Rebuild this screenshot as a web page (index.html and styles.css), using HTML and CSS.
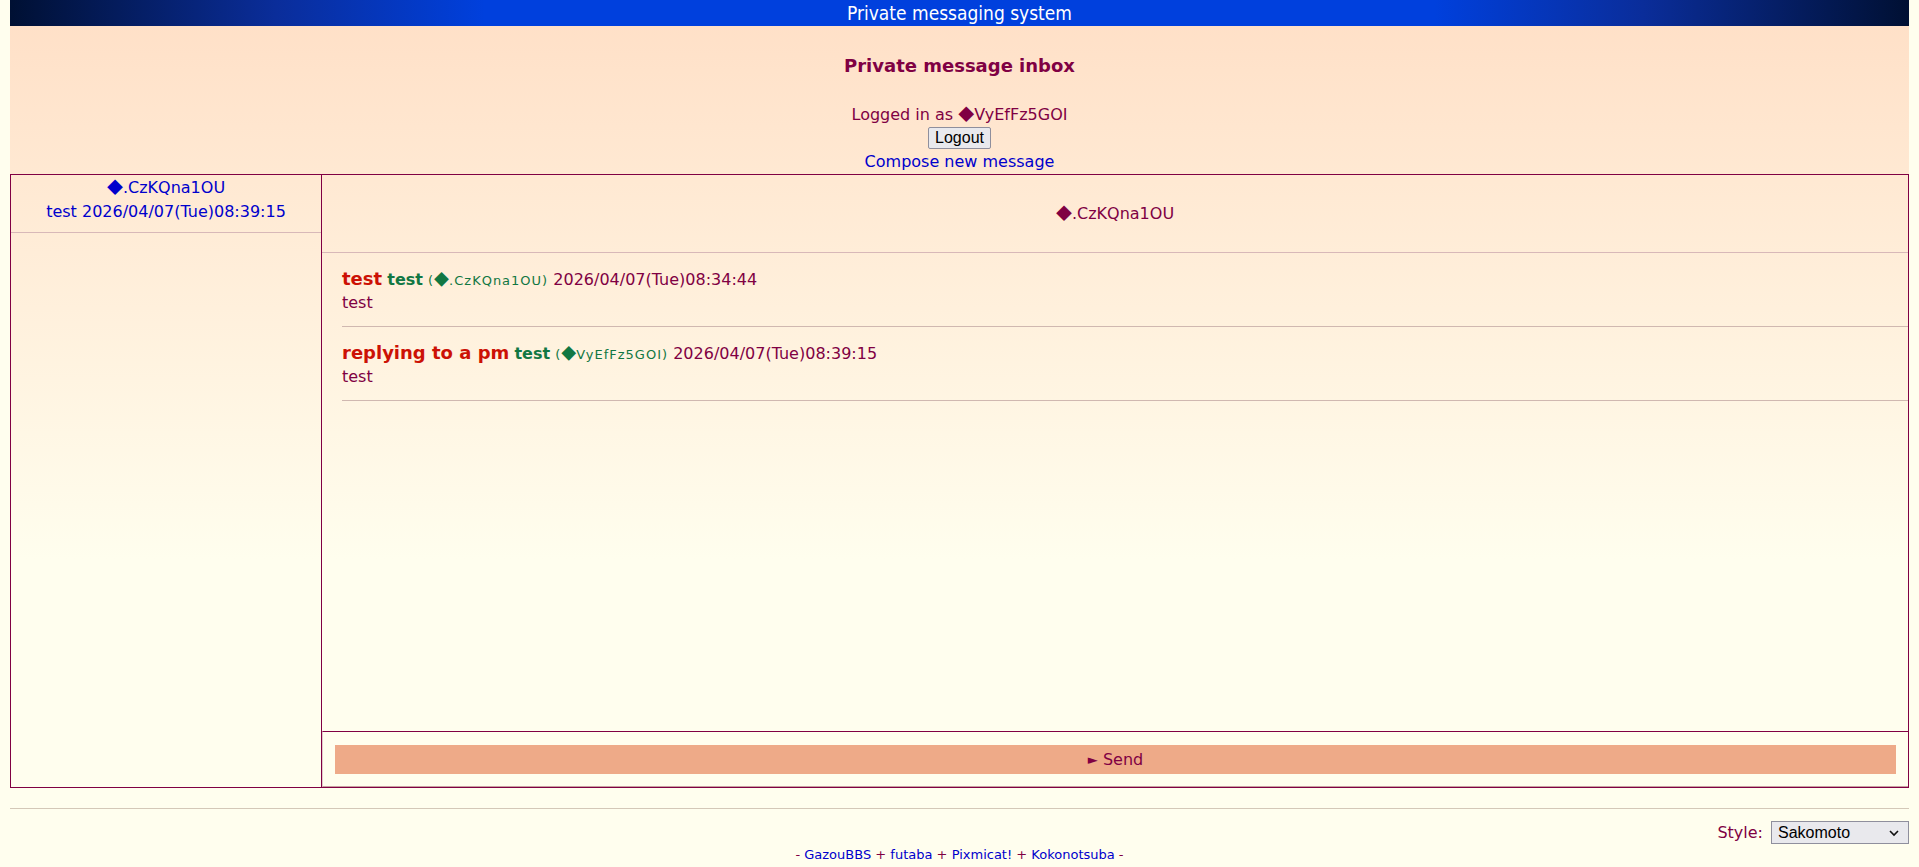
FILE: index.html
```html
<!DOCTYPE html>
<html>
<head>
<meta charset="utf-8">
<title>Private message inbox</title>
<link rel="stylesheet" href="styles.css">
</head>
<body>
<div class="topbar">Private messaging system</div>
<h1 class="title">Private message inbox</h1>
<div class="login">
  <div class="logged">Logged in as <span class="dia">◆</span>VyEfFz5GOI</div>
  <button class="btn" type="button">Logout</button>
  <div class="compose"><a class="link" href="#">Compose new message</a></div>
</div>
<div class="inbox">
  <div class="threads">
    <a class="thread" href="#">
      <span class="line"><span class="dia">◆</span>.CzKQna1OU</span>
      <span class="line">test 2026/04/07(Tue)08:39:15</span>
    </a>
  </div>
  <div class="convo">
    <div class="convo-head"><span class="dia">◆</span>.CzKQna1OU</div>
    <div class="messages">
      <div class="msg">
        <div class="msg-head"><span class="subject">test</span> <span class="name">test</span> <span class="trip">(<span class="dia">◆</span>.CzKQna1OU)</span> <span class="date">2026/04/07(Tue)08:34:44</span></div>
        <div class="msg-body">test</div>
      </div>
      <div class="msg">
        <div class="msg-head"><span class="subject">replying to a pm</span> <span class="name">test</span> <span class="trip">(<span class="dia">◆</span>VyEfFz5GOI)</span> <span class="date">2026/04/07(Tue)08:39:15</span></div>
        <div class="msg-body">test</div>
      </div>
    </div>
    <div class="reply">
      <button class="send" type="button"><span class="tri">►</span> Send</button>
    </div>
  </div>
</div>
<div class="rule"></div>
<div class="style-row">
  <label class="style-label">Style:</label>
  <div class="select"><span>Sakomoto</span><svg width="12" height="8" viewBox="0 0 12 8"><path d="M2 2 L6 6 L10 2" fill="none" stroke="#111" stroke-width="1.6"/></svg></div>
</div>
<div class="footer">- <a href="#">GazouBBS</a> + <a href="#">futaba</a> + <a href="#">Pixmicat!</a> + <a href="#">Kokonotsuba</a> -</div>
</body>
</html>
```
FILE: styles.css
```css
html {
  background: #fffeee;
}
body {
  margin: 0 10px;
  min-height: 867px;
  background: linear-gradient(to bottom, #ffdfc6 0px, #fffeee 560px) no-repeat;
  background-color: #fffeee;
  font-family: "DejaVu Sans", sans-serif;
  font-size: 16px;
  color: #800043;
}
.dia {
  font-family: "Noto Sans CJK JP", "DejaVu Sans", sans-serif;
  line-height: 1;
}
.topbar {
  height: 26px;
  line-height: 26px;
  text-align: center;
  color: #fff;
  font-family: "DejaVu Sans Condensed", "DejaVu Sans", sans-serif;
  font-stretch: condensed;
  font-size: 19px;
  background: linear-gradient(to right, #001033 0%, #0a2d9a 14%, #0040dd 25%, #0040dd 75%, #0a2d9a 86%, #001033 100%);
}
.title {
  margin: 28px 0 0;
  text-align: center;
  font-size: 18px;
  line-height: 24px;
  font-weight: bold;
  color: #800043;
}
.login {
  margin-top: 24px;
  text-align: center;
}
.logged {
  height: 25px;
  line-height: 25px;
}
.btn {
  display: inline-block;
  height: 22px;
  padding: 0 6px;
  margin: 0;
  font-family: "Liberation Sans", Arial, sans-serif;
  font-size: 16px;
  color: #000;
  background: #e9e9ed;
  border: 1px solid #8f8f9d;
  border-radius: 2px;
  vertical-align: top;
}
.link, .thread, .footer a {
  color: #0000cc;
  text-decoration: none;
}
.compose {
  height: 25px;
  line-height: 25px;
}
.inbox {
  display: grid;
  grid-template-columns: 311px 1fr;
  height: 612px;
  border: 1px solid #800043;
}
.threads {
  border-right: 1px solid #800043;
}
.thread {
  display: flex;
  flex-direction: column;
  align-items: center;
  padding: 1px 0 8px;
  line-height: 24px;
  border-bottom: 1px solid #d8b8b8;
}
.thread .line {
  height: 24px;
}
.convo {
  display: flex;
  flex-direction: column;
  min-width: 0;
}
.convo-head {
  height: 77px;
  line-height: 77px;
  text-align: center;
  border-bottom: 1px solid #d8b8b8;
}
.messages {
  flex: 1;
  padding-left: 20px;
}
.msg {
  padding-top: 13px;
}
.msg-head {
  height: 25px;
  line-height: 25px;
  white-space: nowrap;
}
.subject {
  color: #cc1105;
  font-weight: bold;
  font-size: 18px;
}
.name {
  color: #117743;
  font-weight: bold;
}
.trip {
  color: #117743;
  font-size: 13px;
  letter-spacing: 1px;
}
.trip .dia {
  font-size: 15px;
  letter-spacing: 0;
}
.msg-body {
  height: 24px;
  line-height: 24px;
  padding-bottom: 11px;
  border-bottom: 1px solid #d0b8b0;
}
.reply {
  padding: 13px 12px 12px 12px;
  border-top: 1px solid #800043;
  border-left: 1px solid #e2cccc;
  border-bottom: 1px solid #c8a0a0;
}
.send {
  display: block;
  width: 100%;
  height: 29px;
  margin: 0;
  padding: 0;
  border: none;
  background: #eeaa88;
  color: #800043;
  font-family: "DejaVu Sans", sans-serif;
  font-size: 16px;
}
.tri {
  font-size: 13px;
  vertical-align: 1px;
}
.rule {
  margin-top: 20px;
  border-top: 1px solid #d4c8b8;
}
.style-row {
  display: flex;
  justify-content: flex-end;
  align-items: center;
  gap: 8px;
  margin-top: 12px;
}
.style-label {
  font-size: 16px;
}
.select {
  box-sizing: border-box;
  width: 138px;
  height: 23px;
  display: flex;
  align-items: center;
  justify-content: space-between;
  padding: 0 8px 0 6px;
  background: #e9e9ed;
  border: 1px solid #8f8f9d;
  font-family: "Liberation Sans", Arial, sans-serif;
  font-size: 16px;
  color: #000;
}
.footer {
  margin-top: 3px;
  text-align: center;
  font-size: 13px;
  line-height: 16px;
}
```
